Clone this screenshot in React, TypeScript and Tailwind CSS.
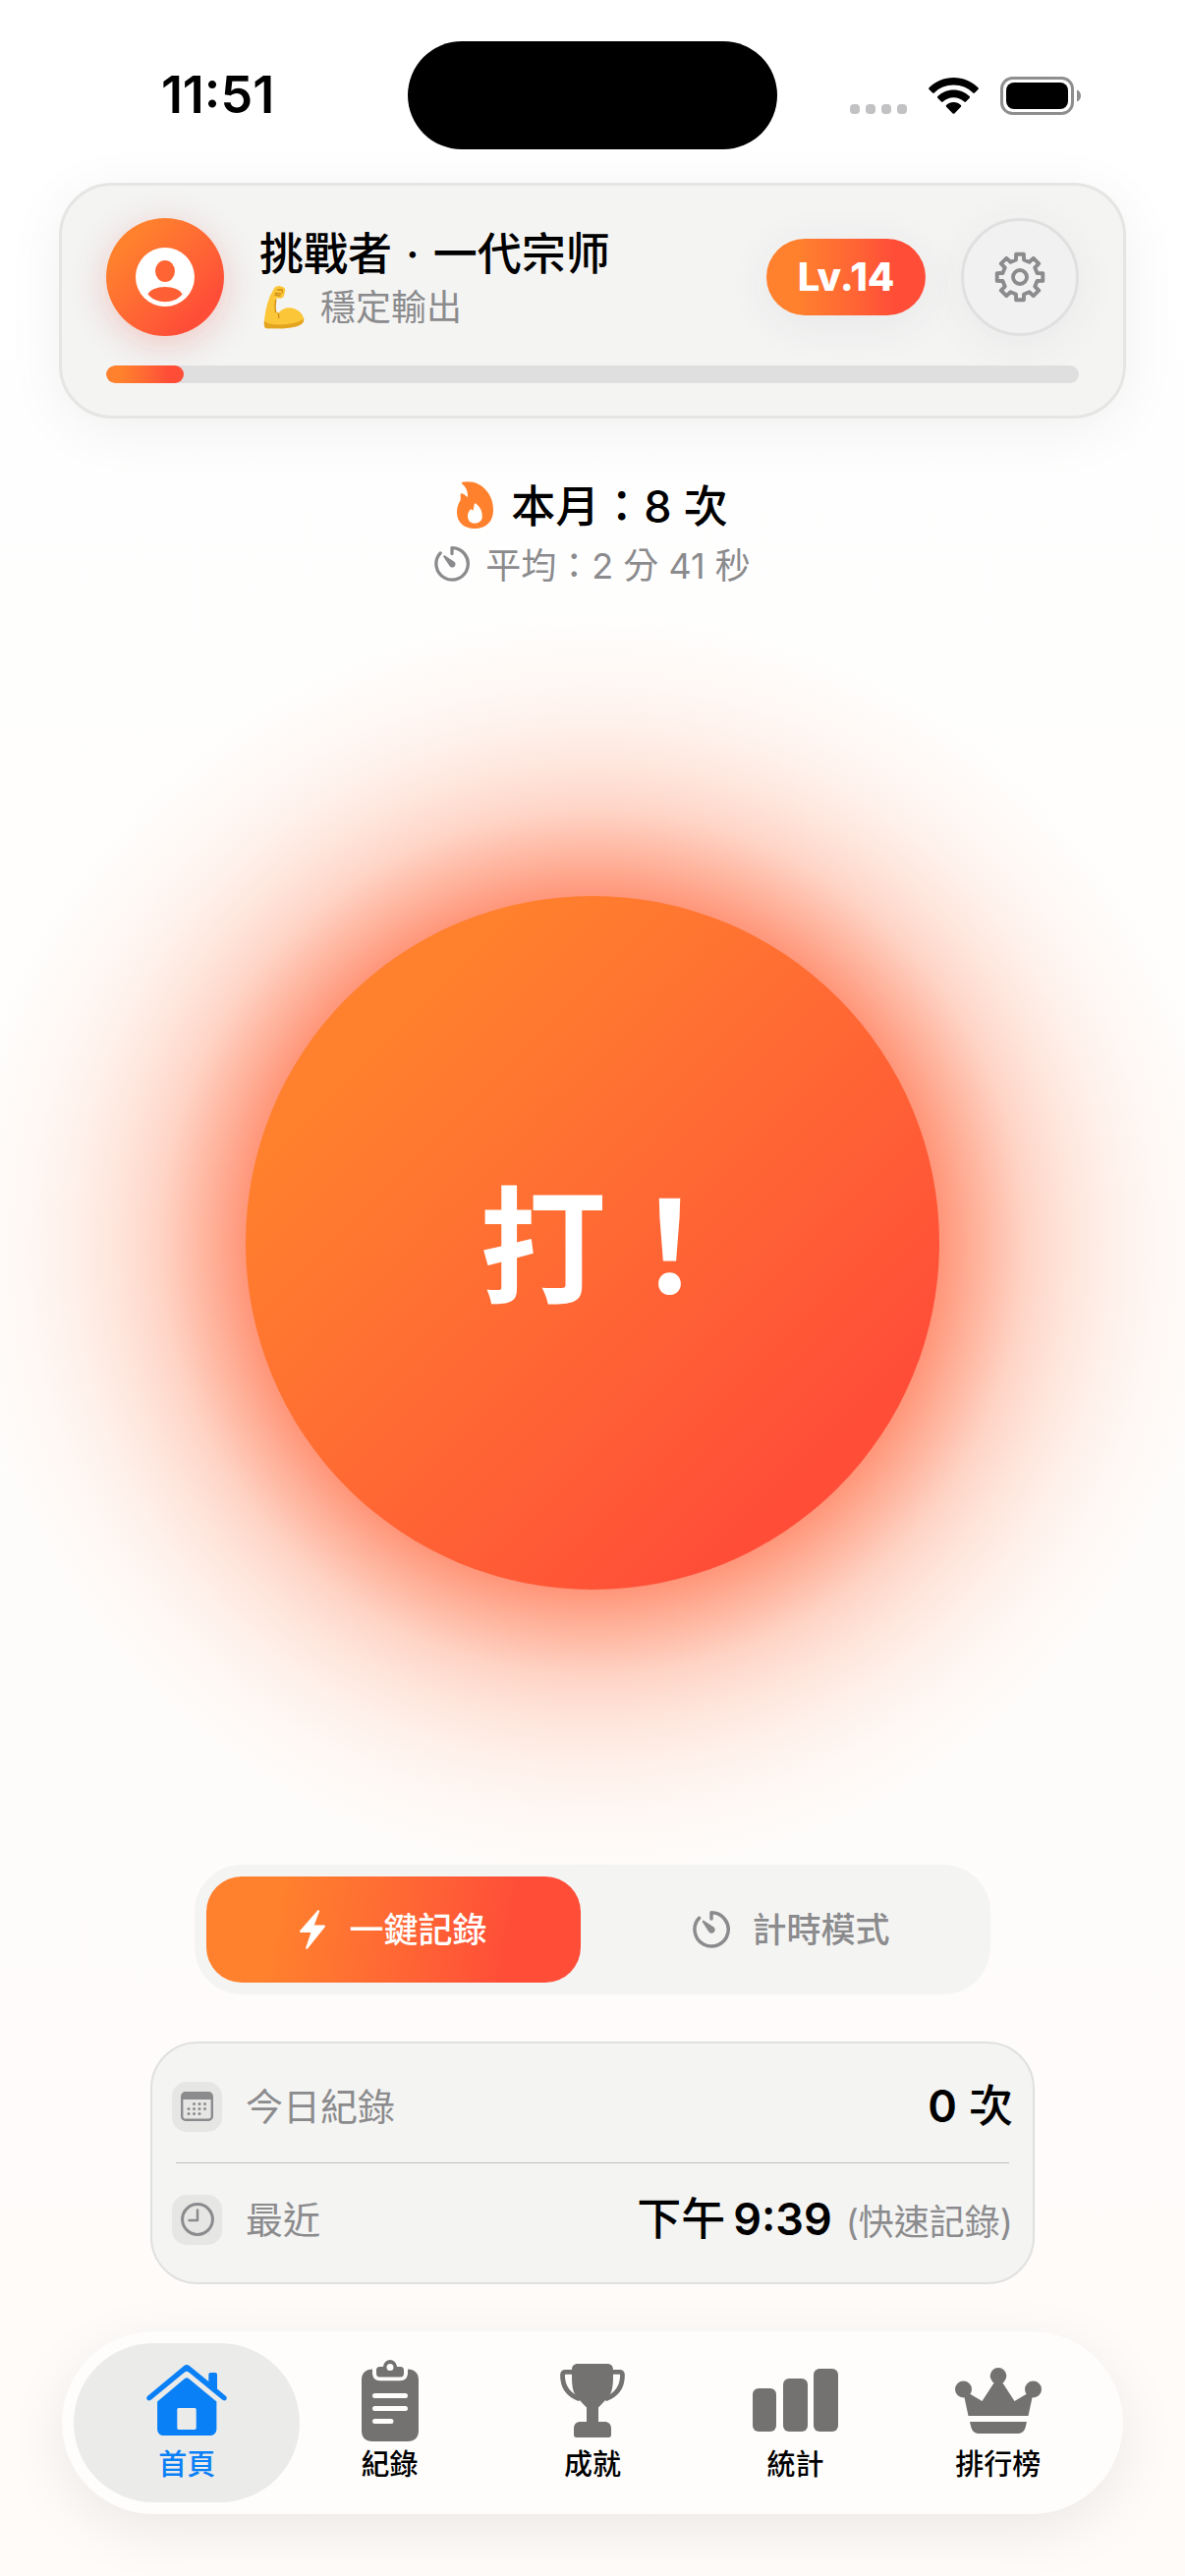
import React from 'react';

interface IconProps {
  className?: string;
}

interface TabItem {
  label: string;
  icon: React.FC<IconProps>;
  size: string;
}

const WifiIcon: React.FC<IconProps> = ({ className }) => (
  <svg viewBox="0 0 51 37" className={className} fill="currentColor" aria-hidden="true">
    <path d="M25.500 0C35.200 0 44.100 3.800 50.500 10.200c.5.500.5 1.200 0 1.700l-3.600 3.600c-.5.500-1.200.5-1.700 0C40.100 10.600 33.200 7.600 25.500 7.600S10.900 10.600 5.800 15.500c-.5.500-1.200.5-1.700 0L.5 11.900c-.5-.5-.5-1.200 0-1.700C6.900 3.800 15.800 0 25.500 0z" />
    <path d="M25.500 12.500c6.300 0 12 2.500 16.200 6.600.5.500.5 1.200 0 1.700l-3.700 3.700c-.5.500-1.200.5-1.700 0-2.800-2.700-6.600-4.300-10.800-4.300s-8 1.600-10.800 4.300c-.5.500-1.200.5-1.700 0l-3.700-3.700c-.5-.5-.5-1.200 0-1.700 4.200-4.100 9.900-6.600 16.200-6.600z" />
    <path d="M25.500 25c2.900 0 5.500 1.100 7.400 3 .5.500.5 1.200 0 1.700l-6.500 6.700c-.5.500-1.300.5-1.800 0l-6.500-6.700c-.5-.5-.5-1.200 0-1.700 1.900-1.900 4.500-3 7.400-3z" />
  </svg>
);

const BatteryIcon: React.FC<IconProps> = ({ className }) => (
  <svg viewBox="0 0 82 39" className={className} aria-hidden="true">
    <rect x="1.500" y="1.500" width="72" height="36" rx="11" fill="none" stroke="#8e8e8e" strokeWidth="3" />
    <rect x="6" y="6" width="63" height="27" rx="8" fill="#000" />
    <path d="M78 13.500c2.600 1 4 3.200 4 6s-1.400 5-4 6z" fill="#8e8e8e" />
  </svg>
);

const PersonIcon: React.FC<IconProps> = ({ className }) => (
  <svg viewBox="0 0 60 60" className={className} aria-hidden="true">
    <circle cx="30" cy="30" r="30" fill="#fff" />
    <ellipse cx="30" cy="24" rx="10" ry="11" fill="#ff6434" />
    <path d="M12.500 47.500c2.500-4.700 9-7.500 17.500-7.500s15 2.800 17.500 7.500C43.500 52.500 37 55.200 30 55.200s-13.500-2.700-17.500-7.700z" fill="#ff5f35" />
  </svg>
);

const BicepsIcon: React.FC<IconProps> = ({ className }) => (
  <svg viewBox="0 0 44 46" className={className} aria-hidden="true">
    <path
      d="M11 3.500C12.500 1.200 15.500.6 18 1.400c3 .6 4.500 2 4.300 4.200l-1.200 5c-.8 2.200-2 3.200-4.300 3.200l-3.500-.2c-.9 3.800-1 8.400-.6 12.800 1.300.4 2 1.200 2.400 2.500 3-3.800 7-5.800 11.700-5.600 7 .3 13.500 5.400 14.400 11.300.6 4.400-3.300 6.600-8.500 8-6 1.500-13 2-18.500 1.700H3.500C.8 44 .7 41 .9 37c.8-9 2.700-18 6-26z"
      fill="#fbc638"
    />
    <path d="M.9 36.500c4 3.600 10 4.300 17 4 9-.3 18.500-2.300 23.300-6 .5 4-3.300 6.600-8.500 8-6 1.500-13 2-18.500 1.700H3.500C.8 44 .7 41 .9 36.500z" fill="#e3a41f" />
    <path d="M12.700 15.500c-.9 4-1 8-.2 12M15.100 29c.8 1.700 1 3 .6 4.500M14.500 5l4.500-.2.5 2.700M12.500 8.500l5.500.4M17 11l-5-.8" fill="none" stroke="#d08f18" strokeWidth="1.400" strokeLinecap="round" />
  </svg>
);

// eight teeth, each one four points: base, tip, tip, base
const gearOutline = Array.from({ length: 8 }, (_, tooth) =>
  [
    [-13, 18],
    [-9.5, 23.6],
    [9.5, 23.6],
    [13, 18],
  ]
    .map(([offset, radius]) => {
      const angle = ((tooth * 45 + offset) * Math.PI) / 180;
      return `${(26 + radius * Math.sin(angle)).toFixed(2)},${(26 - radius * Math.cos(angle)).toFixed(2)}`;
    })
    .join(' '),
).join(' ');

const GearIcon: React.FC<IconProps> = ({ className }) => (
  <svg viewBox="0 0 52 52" className={className} fill="none" stroke="currentColor" strokeWidth="3.900" strokeLinejoin="round" aria-hidden="true">
    <polygon points={gearOutline} />
    <circle cx="26" cy="26" r="7" />
  </svg>
);

const FlameIcon: React.FC<IconProps> = ({ className }) => (
  <svg viewBox="0 0 37 48" className={className} fill="currentColor" aria-hidden="true">
    <path
      fillRule="evenodd"
      d="M5.500.8C15-1 24.500 2 30.500 10 35 15.600 37 22 37 29.500 37 41 29.500 48 18 48 7 48 0 41.500 0 31.500c0-4.800 1.200-8.500 3.700-12.500V13.500c0-1.300 1.200-1.700 2.200-.9 2.200 1.300 3.600 2.300 4.900 3.600C11.500 11 9.800 6 5.300 2.500c-.6-.6-.4-1.500.2-1.700zM18.500 22c-1.600 1.700-.9 5-2 7.200-.7.900-1.500-1.200-2.700-.8-1.800 2-2.800 4.200-2.800 6.700 0 4.800 2.800 7.700 7 7.700 4.600 0 7.800-2.800 7.800-7.500 0-5.700-2.900-10.500-7.300-13.300z"
    />
  </svg>
);

const TimerIcon: React.FC<IconProps> = ({ className }) => (
  <svg viewBox="0 0 36 36" className={className} aria-hidden="true">
    <path d="M18 7.500V1.700A16.200 16.200 0 1 1 6.200 6.900" fill="none" stroke="currentColor" strokeWidth="3.300" strokeLinecap="round" strokeLinejoin="round" />
    <path d="M9.500 9.500c.4-.4.900-.4 1.400 0L20 15.500a3.300 3.300 0 1 1-4.700 4.300L9.400 10.900c-.3-.5-.3-1 .1-1.400z" fill="currentColor" />
  </svg>
);

const BoltIcon: React.FC<IconProps> = ({ className }) => (
  <svg viewBox="0 0 26 40" className={className} fill="currentColor" aria-hidden="true">
    <path d="M18.300.6c1-1 2.200-.3 1.700 1.100L14.800 15.500h10c1.200 0 1.600 1 .8 2L8 39.400c-1 1-2.200.3-1.700-1.100L11.400 23H1.200C0 23-.4 22 .4 21z" />
  </svg>
);

const CalendarIcon: React.FC<IconProps> = ({ className }) => (
  <svg viewBox="0 0 33 30" className={className} fill="currentColor" aria-hidden="true">
    <rect x="1.200" y="1.200" width="30.600" height="27.600" rx="3.500" fill="none" stroke="currentColor" strokeWidth="2.400" />
    <path d="M1 5a4 4 0 0 1 4-4h23a4 4 0 0 1 4 4v3H1z" />
    <circle cx="13.500" cy="12.500" r="1.500" />
    <circle cx="19" cy="12.500" r="1.500" />
    <circle cx="24.500" cy="12.500" r="1.500" />
    <circle cx="8" cy="17.500" r="1.500" />
    <circle cx="13.500" cy="17.500" r="1.500" />
    <circle cx="19" cy="17.500" r="1.500" />
    <circle cx="24.500" cy="17.500" r="1.500" />
    <circle cx="8" cy="22.500" r="1.500" />
    <circle cx="13.500" cy="22.500" r="1.500" />
    <circle cx="19" cy="22.500" r="1.500" />
  </svg>
);

const ClockIcon: React.FC<IconProps> = ({ className }) => (
  <svg viewBox="0 0 34 34" className={className} fill="none" stroke="currentColor" strokeLinecap="round" strokeLinejoin="round" aria-hidden="true">
    <circle cx="17" cy="17" r="15.400" strokeWidth="3" />
    <path d="M17 7.500V18H8.500" strokeWidth="2.500" />
  </svg>
);

const HomeIcon: React.FC<IconProps> = ({ className }) => (
  <svg viewBox="0 0 82 72" className={className} fill="currentColor" aria-hidden="true">
    <path d="M38 1.200c1.800-1.600 4.200-1.600 6 0L63.300 17V10c0-1.200.8-2 2-2H70c1.200 0 2 .8 2 2v14.500l8.700 7.300c1.300 1.100 1.400 2.600.5 3.700-1 1.200-2.800 1.200-4.100.1L43 7.600c-1.200-1-2.800-1-4 0L5 35.600c-1.400 1.100-3.200 1.100-4.200-.1-.9-1.100-.8-2.600.5-3.700z" />
    <path fillRule="evenodd" d="M39 14c1.200-1 2.800-1 4 0l28.400 23.500V65c0 4.300-2.500 7-6.700 7H17.600c-4.200 0-6.500-2.700-6.500-7V37.500zM33 44c-1 0-1.700.7-1.700 1.700v18.600c0 1 .7 1.700 1.700 1.700h16c1 0 1.700-.7 1.700-1.700V45.700c0-1-.7-1.700-1.700-1.700z" />
  </svg>
);

const ClipboardIcon: React.FC<IconProps> = ({ className }) => (
  <svg viewBox="0 0 58 83" className={className} fill="currentColor" aria-hidden="true">
    <path
      fillRule="evenodd"
      d="M11 9.500v3.700c0 5 3 8 8 8h20c5 0 8-3 8-8V9.500c7 0 11 4 11 11V72c0 7-4 11-11 11H11C4 83 0 79 0 72V20.500c0-7 4-11 11-11zM13.500 34a2.500 2.500 0 0 0 0 5h31a2.500 2.500 0 0 0 0-5zM13.500 47a2.500 2.500 0 0 0 0 5h31a2.500 2.500 0 0 0 0-5zM13.500 60a2.500 2.500 0 0 0 0 5H30a2.500 2.500 0 0 0 0-5z"
    />
    <path fillRule="evenodd" d="M22 7C22.500 3 25.300 0 29 0s6.500 3 7 7h3.500C42 7 43 8.200 43 10.500v3c0 2.500-1 4-3.500 4h-21c-2.500 0-3.500-1.500-3.500-4v-3C15 8.200 16 7 18.500 7zM29 4a3.500 3.500 0 1 0 0 7 3.500 3.500 0 0 0 0-7z" />
  </svg>
);

const TrophyIcon: React.FC<IconProps> = ({ className }) => (
  <svg viewBox="0 0 66 75" className={className} fill="currentColor" aria-hidden="true">
    <path d="M18 0h30c3.800 0 6 2.300 6 6v8c0 7-.8 13-3 17-1.500 3-5 6-12 13.500V59h6c4.500 0 7 2.500 7 7v6.500c0 1.500-1 2.500-2.500 2.500h-33c-1.500 0-2.500-1-2.500-2.500V66c0-4.500 2.500-7 7-7h6V44.500C20 37 16.500 34 15 31c-2.200-4-3-10-3-17V6c0-3.700 2.200-6 6-6z" />
    <path d="M13 8.300H5.500c-2 0-3 1.200-3 3.200C2.500 24 9 32 20 36M53 8.300h7.500c2 0 3 1.200 3 3.200C63.500 24 57 32 46 36" fill="none" stroke="currentColor" strokeWidth="4.800" />
  </svg>
);

const ChartIcon: React.FC<IconProps> = ({ className }) => (
  <svg viewBox="0 0 87 64" className={className} fill="currentColor" aria-hidden="true">
    <rect x="0" y="20" width="24" height="44" rx="6" />
    <rect x="31" y="10" width="25" height="54" rx="6" />
    <rect x="62" y="0" width="25" height="64" rx="6" />
  </svg>
);

const CrownIcon: React.FC<IconProps> = ({ className }) => (
  <svg viewBox="0 0 88 67" className={className} fill="currentColor" aria-hidden="true">
    <circle cx="44" cy="8.300" r="8.300" />
    <circle cx="8.500" cy="22" r="8.500" />
    <circle cx="79.500" cy="22" r="8.500" />
    <path d="M40.500 14h7l13 20L74 26l5 2-4.500 21h-61L9 28l5-2 13.500 8z" />
    <path d="M15 55h58l-1.200 5c-1 4.500-3.800 7-8.300 7h-39c-4.500 0-7.300-2.500-8.300-7z" />
  </svg>
);

const tabs: TabItem[] = [
  { label: '首頁', icon: HomeIcon, size: 'h-[72px]' },
  { label: '紀錄', icon: ClipboardIcon, size: 'h-[83px]' },
  { label: '成就', icon: TrophyIcon, size: 'h-[75px]' },
  { label: '統計', icon: ChartIcon, size: 'h-[64px]' },
  { label: '排行榜', icon: CrownIcon, size: 'h-[67px]' },
];

const StatusBar: React.FC = () => (
  <div className="grid h-[186px] grid-cols-[1fr_376px_1fr] pt-[42px]">
    <div className="flex h-[110px] items-center justify-center pr-7 pl-14 text-[52px] font-semibold">11:51</div>
    <div className="h-[110px] rounded-full bg-black" />
    <div className="flex h-[110px] items-center justify-end gap-[22px] pr-[106px]">
      <div className="flex gap-[6px] pt-[28px]">
        <span className="size-[10px] rounded-[4px] bg-[#c2c2c4]" />
        <span className="size-[10px] rounded-[4px] bg-[#c2c2c4]" />
        <span className="size-[10px] rounded-[4px] bg-[#c2c2c4]" />
        <span className="size-[10px] rounded-[4px] bg-[#c2c2c4]" />
      </div>
      <WifiIcon className="h-[37px] w-[51px]" />
      <BatteryIcon className="h-[39px] w-[82px]" />
    </div>
  </div>
);

const ProfileCard: React.FC = () => (
  <header className="mx-[60px] flex h-[240px] flex-col rounded-[54px] border-[3px] border-[#e5e5e4] bg-[#f4f4f3] px-[45px] pt-[33px] shadow-[0_12px_60px_rgba(0,0,0,0.06)]">
    <div className="flex h-[120px] items-center">
      <div className="flex size-[120px] items-center justify-center rounded-full bg-linear-135 from-[#ff802d] from-20% to-[#ff4d38] to-80% shadow-[0_8px_32px_rgba(255,77,56,0.22),0_8px_60px_rgba(60,60,90,0.05)]">
        <PersonIcon className="size-[60px]" />
      </div>
      <div className="ml-9 flex-1 pt-1.5">
        <h1 className="text-[45px] leading-[56px] font-medium">
          挑戰者<span className="mx-0.5"> · </span>一代宗师
        </h1>
        <p className="flex items-center gap-[14px] text-[36px] leading-[52px] text-[#8b8b8d]">
          <BicepsIcon className="ml-1 h-[46px] w-[44px]" />
          穩定輸出
        </p>
      </div>
      <span className="flex h-[78px] w-[162px] items-center justify-center rounded-full bg-linear-to-r from-[#ff802d] from-20% to-[#ff4d38] to-80% text-[40px] font-extrabold text-white shadow-[0_8px_48px_rgba(60,60,90,0.07)]">
        Lv.14
      </span>
      <button
        type="button"
        aria-label="設定"
        className="ml-9 flex size-[120px] items-center justify-center rounded-full border-[3px] border-[#e0e0e0] bg-[#f1f1f1] text-[#8b8b8d] shadow-[0_8px_48px_rgba(60,60,90,0.06)]"
      >
        <GearIcon className="size-[52px]" />
      </button>
    </div>
    <div className="mt-[30px] h-[18px] overflow-hidden rounded-full bg-[#dfdfdf]">
      <div className="h-full w-[8%] rounded-full bg-linear-to-r from-[#ff802d] from-20% to-[#ff4d38] to-80%" />
    </div>
  </header>
);

const MonthSummary: React.FC = () => (
  <section className="mt-[61px] flex flex-col items-center gap-2">
    <p className="flex h-[54px] items-center gap-[18px] text-[45px] font-medium">
      <FlameIcon className="h-[48px] w-[37px] text-[#ff812d]" />
      <span lang="zh-Hant">
        本月<span className="font-['Noto_Sans_CJK_TC',sans-serif]">：</span>8 次
      </span>
    </p>
    <p className="flex h-[50px] items-center gap-4 text-[36px] text-[#8b8b8d]">
      <TimerIcon className="size-9" />
      <span lang="zh-Hant">
        平均<span className="font-['Noto_Sans_CJK_TC',sans-serif]">：</span>2 分 41 秒
      </span>
    </p>
  </section>
);

const HitButton: React.FC = () => (
  <div className="flex flex-1 items-center pt-8">
    <div className="relative">
      <span className="pointer-events-none absolute -inset-[287px] rounded-full bg-[radial-gradient(closest-side,rgba(255,95,55,0.72)_53%,rgba(255,98,56,0.67)_55%,rgba(255,103,58,0.5)_61%,rgba(255,108,60,0.28)_69%,rgba(255,112,60,0.17)_76%,rgba(255,118,60,0.09)_83%,rgba(255,130,60,0.04)_91%,rgba(255,130,60,0)_100%)]" />
      <button
        type="button"
        className="relative flex size-[706px] items-center justify-center rounded-full bg-linear-135 from-[#ff802d] from-20% to-[#ff4d38] to-82% pb-2 pl-[28px] font-['Noto_Sans_CJK_TC',sans-serif] text-[129px] font-bold text-white"
      >
        打！
      </button>
    </div>
  </div>
);

const ModeSwitch: React.FC = () => (
  <div className="relative flex h-[132px] w-[810px] max-w-full gap-6 rounded-[48px] bg-[#f4f4f3] p-3 text-[35px] font-medium">
    <button
      type="button"
      aria-pressed="true"
      className="flex flex-1 items-center justify-center gap-6 rounded-[36px] bg-linear-100 from-[#ff802d] from-20% to-[#ff4d38] to-80% text-white"
    >
      <BoltIcon className="h-[40px] w-[26px]" />
      一鍵記錄
    </button>
    <button type="button" aria-pressed="false" className="flex flex-1 items-center justify-center gap-[22px] rounded-[36px] text-[#8b8b8d]">
      <TimerIcon className="size-[38px]" />
      計時模式
    </button>
  </div>
);

const RecordCard: React.FC = () => (
  <dl className="mt-12 w-[900px] max-w-full rounded-[48px] border-2 border-[#dfe0df] bg-[#f4f4f3] px-[20px] py-[7px]">
    <div className="flex h-[114px] items-center">
      <dt className="flex flex-1 items-center gap-6 text-[38px] text-[#8b8b8d]">
        <span className="flex size-[51px] items-center justify-center rounded-[15px] bg-[#e6e6e5]">
          <CalendarIcon className="h-[30px] w-[33px]" />
        </span>
        今日紀錄
      </dt>
      <dd className="text-[45px] font-medium">
        <span className="font-semibold">0</span> 次
      </dd>
    </div>
    <div className="mx-1 h-px bg-[#bcbdbd]" />
    <div className="flex h-[114px] items-center">
      <dt className="flex flex-1 items-center gap-6 text-[38px] text-[#8b8b8d]">
        <span className="flex size-[51px] items-center justify-center rounded-[15px] bg-[#e6e6e5]">
          <ClockIcon className="size-[34px]" />
        </span>
        最近
      </dt>
      <dd className="flex items-baseline gap-[14px]">
        <span className="flex items-baseline gap-2 text-[45px] font-medium">
          下午<span className="font-semibold">9:39</span>
        </span>
        <span className="text-[36px] text-[#8b8b8d]">(快速記錄)</span>
      </dd>
    </div>
  </dl>
);

const TabBar: React.FC = () => (
  <nav className="mx-[63px] mt-12 mb-[63px] flex h-[186px] rounded-full bg-[#fefdfc] px-6 py-3 shadow-[0_16px_60px_rgba(0,0,0,0.08)]">
    {tabs.map(({ label, icon: Icon, size }, i) => (
      <a
        key={label}
        href={`#tab-${i}`}
        aria-current={i === 0 ? 'page' : undefined}
        className={`relative flex flex-1 flex-col items-center pt-3 text-[29px] leading-[40px] font-medium ${i === 0 ? 'text-[#0a80f6]' : 'text-black'}`}
      >
        {i === 0 && <span className="absolute -inset-x-3 inset-y-0 rounded-full bg-[#ebebea]" />}
        <span className={`relative flex h-[92px] items-center justify-center ${i === 0 ? '' : 'text-[#737270]'}`}>
          <Icon className={size} />
        </span>
        <span className="relative">{label}</span>
      </a>
    ))}
  </nav>
);

const App: React.FC = () => {
  return (
    <div className="flex min-h-screen flex-col overflow-hidden bg-linear-to-b from-white to-[#fefbf9] font-[Inter,'Noto_Sans_CJK_TC',sans-serif] text-black">
      <StatusBar />
      <ProfileCard />
      <MonthSummary />
      <main className="flex flex-1 flex-col items-center">
        <HitButton />
        <ModeSwitch />
        <RecordCard />
      </main>
      <TabBar />
    </div>
  );
};

export default App;
